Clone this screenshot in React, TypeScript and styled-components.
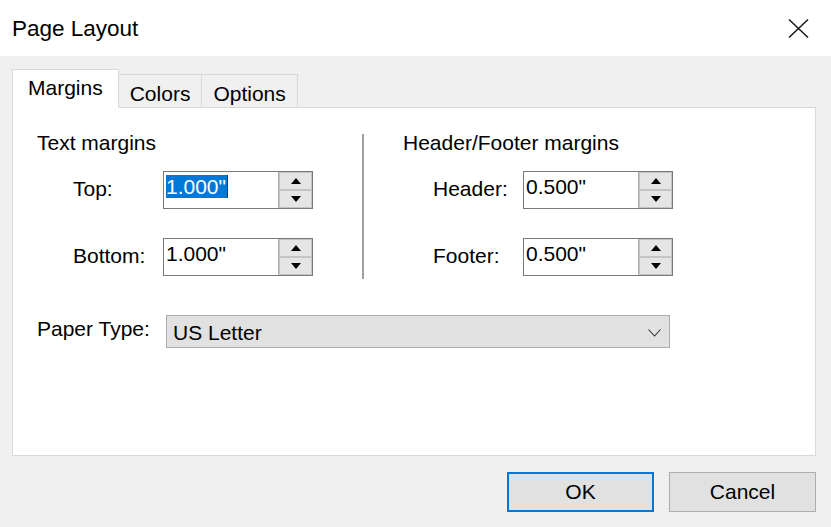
import React from 'react';
import styled, { createGlobalStyle } from 'styled-components';

const GlobalStyle = createGlobalStyle`
  html, body {
    margin: 0;
    padding: 0;
    background: #f0f0f0;
  }
  body {
    font-family: "Liberation Sans", Arial, sans-serif;
    color: #000;
  }
`;

const Window = styled.div`
  width: 831px;
  height: 527px;
  display: flex;
  flex-direction: column;
  background: #f0f0f0;
  overflow: hidden;
`;

const TitleBar = styled.div`
  height: 56px;
  flex: none;
  background: #fff;
  display: flex;
  align-items: center;
  justify-content: space-between;
  padding: 0 22px 0 12px;
  box-sizing: border-box;
`;

const Title = styled.div`
  font-size: 22.5px;
  margin-top: 2px;
`;

const CloseButton = styled.div`
  width: 22px;
  height: 20px;
  display: flex;
  align-items: center;
  justify-content: center;
`;

const Body = styled.div`
  flex: 1;
  display: flex;
  flex-direction: column;
  padding: 14px 15px 0 12px;
`;

const TabStrip = styled.div`
  display: flex;
  align-items: flex-end;
  height: 38px;
  position: relative;
  z-index: 1;
`;

const Tab = styled.div<{ $active?: boolean }>`
  box-sizing: border-box;
  height: ${(p) => (p.$active ? '39px' : '34px')};
  padding: ${(p) => (p.$active ? '6px 15px 0' : '7px 11px 0 11px')};
  background: ${(p) => (p.$active ? '#fff' : '#f0f0f0')};
  border: 1px solid #d9d9d9;
  border-bottom: ${(p) => (p.$active ? 'none' : '1px solid #d9d9d9')};
  margin-left: ${(p) => (p.$active ? '0' : '-1px')};
  font-size: 21px;
  line-height: 24px;
  &:first-child {
    margin-left: 0;
  }
`;

const Panel = styled.div`
  height: 349px;
  box-sizing: border-box;
  background: #fff;
  border: 1px solid #d9d9d9;
  margin-top: -1px;
  padding: 23px 24px 0 24px;
`;

const Groups = styled.div`
  display: flex;
`;

const Group = styled.div<{ $width?: number; $pad?: number; $indent: number }>`
  width: ${(p) => (p.$width ? `${p.$width}px` : 'auto')};
  padding-left: ${(p) => p.$pad ?? 0}px;
  display: flex;
  flex-direction: column;
  --indent: ${(p) => p.$indent}px;
`;

const GroupTitle = styled.div`
  font-size: 21px;
  line-height: 24px;
  margin-bottom: 16px;
`;

const Divider = styled.div`
  width: 2px;
  height: 145px;
  margin-top: 3px;
  background: #a0a0a0;
  flex: none;
`;

const FieldRow = styled.div`
  display: flex;
  align-items: center;
  padding-left: var(--indent);
  & + & {
    margin-top: 29px;
  }
`;

const FieldLabel = styled.div`
  width: 90px;
  font-size: 21px;
  padding-bottom: 3px;
`;

const Spin = styled.div`
  width: 150px;
  height: 38px;
  box-sizing: border-box;
  border: 1px solid #7a7a7a;
  display: flex;
  background: #fff;
`;

const SpinText = styled.div`
  flex: 1;
  padding: 1px 0 0 2px;
  font-size: 21px;
  line-height: 27px;
`;

const Selected = styled.span`
  background: #0078d7;
  color: #fff;
  padding-right: 1px;
  border-right: 1px solid #333;
`;

const SpinButtons = styled.div`
  width: 33px;
  display: flex;
  flex-direction: column;
  border-left: 1px solid #adadad;
`;

const SpinButton = styled.div`
  flex: 1;
  background: #e5e5e5;
  border: 1px solid #c4c4c4;
  display: flex;
  align-items: center;
  justify-content: center;
`;

const PaperRow = styled.div`
  display: flex;
  align-items: center;
  margin-top: 36px;
`;

const PaperLabel = styled.div`
  width: 129px;
  font-size: 21px;
  padding-bottom: 5px;
`;

const Dropdown = styled.div`
  width: 504px;
  height: 33px;
  box-sizing: border-box;
  background: #e1e1e1;
  border: 1px solid #adadad;
  display: flex;
  align-items: center;
  justify-content: space-between;
  padding: 2px 8px 0 6px;
  font-size: 21px;
`;

const Footer = styled.div`
  display: flex;
  justify-content: flex-end;
  gap: 15px;
  margin-top: 16px;
`;

const Button = styled.div<{ $default?: boolean }>`
  width: 147px;
  height: 40px;
  box-sizing: border-box;
  background: #e1e1e1;
  border: ${(p) => (p.$default ? '2px solid #0078d7' : '1px solid #adadad')};
  display: flex;
  align-items: center;
  justify-content: center;
  font-size: 21px;
`;

function Triangle({ down }: { down?: boolean }) {
  return (
    <svg width="10" height="6" viewBox="0 0 10 6">
      <polygon points={down ? '0,0 10,0 5,6' : '0,6 10,6 5,0'} fill="#000" />
    </svg>
  );
}

function SpinBox({ value, selected }: { value: string; selected?: boolean }) {
  return (
    <Spin>
      <SpinText>{selected ? <Selected>{value}</Selected> : value}</SpinText>
      <SpinButtons>
        <SpinButton>
          <Triangle />
        </SpinButton>
        <SpinButton>
          <Triangle down />
        </SpinButton>
      </SpinButtons>
    </Spin>
  );
}

export default function App() {
  return (
    <Window>
      <GlobalStyle />
      <TitleBar>
        <Title>Page Layout</Title>
        <CloseButton>
          <svg width="21" height="19" viewBox="0 0 21 19">
            <path d="M1 0.5 L20 18.5 M20 0.5 L1 18.5" stroke="#1a1a1a" strokeWidth="1.5" />
          </svg>
        </CloseButton>
      </TitleBar>
      <Body>
        <TabStrip>
          <Tab $active>Margins</Tab>
          <Tab>Colors</Tab>
          <Tab>Options</Tab>
        </TabStrip>
        <Panel>
          <Groups>
            <Group $width={325} $indent={36}>
              <GroupTitle>Text margins</GroupTitle>
              <FieldRow>
                <FieldLabel>Top:</FieldLabel>
                <SpinBox value={'1.000"'} selected />
              </FieldRow>
              <FieldRow>
                <FieldLabel>Bottom:</FieldLabel>
                <SpinBox value={'1.000"'} />
              </FieldRow>
            </Group>
            <Divider />
            <Group $pad={39} $indent={30}>
              <GroupTitle>Header/Footer margins</GroupTitle>
              <FieldRow>
                <FieldLabel>Header:</FieldLabel>
                <SpinBox value={'0.500"'} />
              </FieldRow>
              <FieldRow>
                <FieldLabel>Footer:</FieldLabel>
                <SpinBox value={'0.500"'} />
              </FieldRow>
            </Group>
          </Groups>
          <PaperRow>
            <PaperLabel>Paper Type:</PaperLabel>
            <Dropdown>
              <span>US Letter</span>
              <svg width="13" height="8" viewBox="0 0 13 8">
                <path d="M0.5 0.5 L6.5 7 L12.5 0.5" stroke="#333" strokeWidth="1.1" fill="none" />
              </svg>
            </Dropdown>
          </PaperRow>
        </Panel>
        <Footer>
          <Button $default>OK</Button>
          <Button>Cancel</Button>
        </Footer>
      </Body>
    </Window>
  );
}
